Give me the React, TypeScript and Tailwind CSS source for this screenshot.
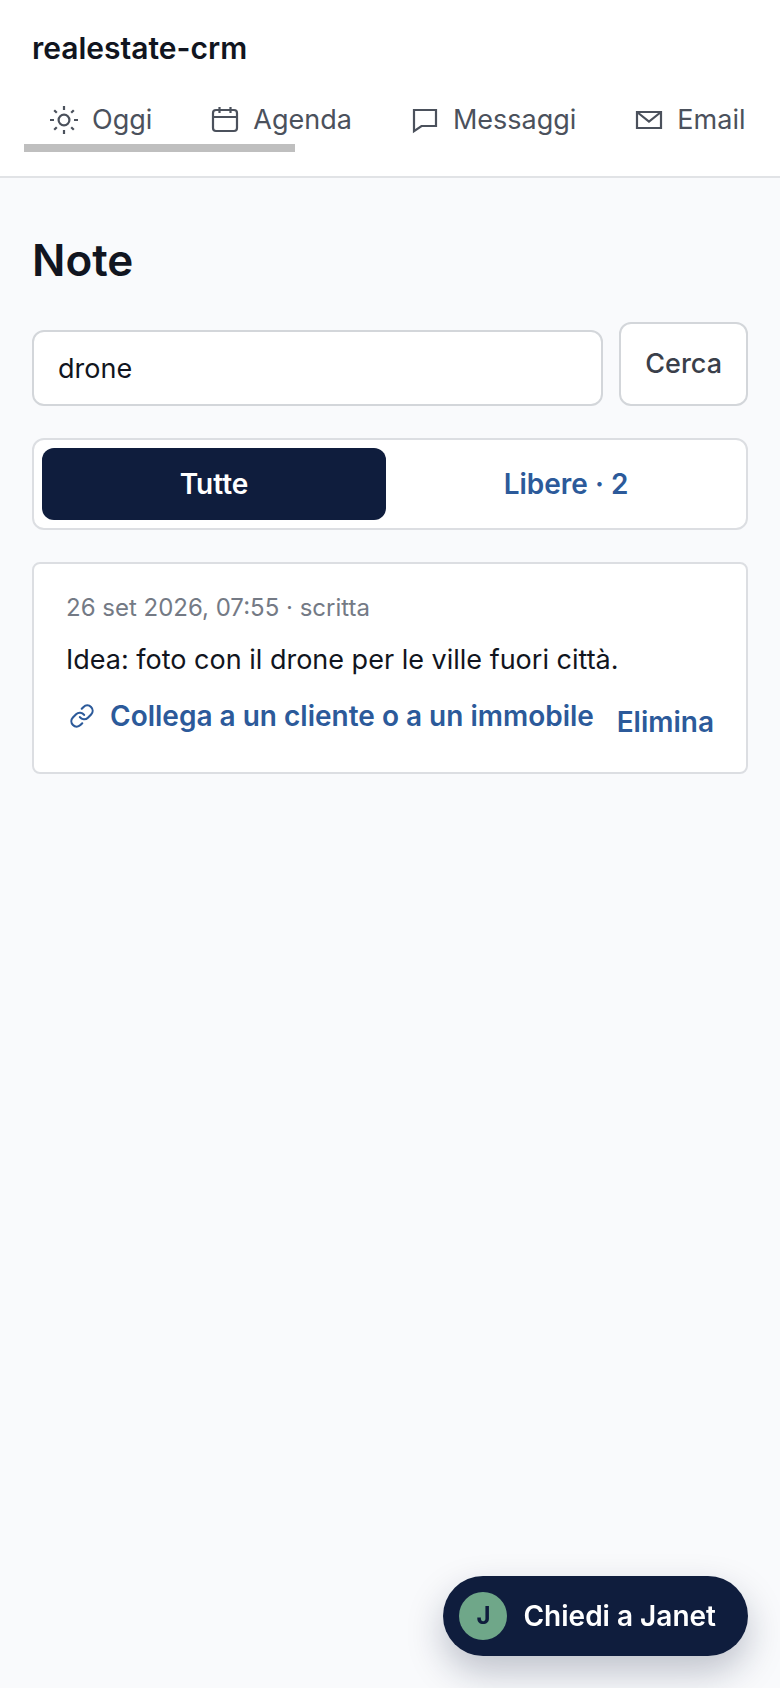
import { useState } from 'react';
import type { FormEvent, ReactNode } from 'react';

const iconProps = {
  viewBox: '0 0 32 32',
  fill: 'none',
  stroke: 'currentColor',
  strokeWidth: 2.2,
  className: 'size-8 shrink-0',
  'aria-hidden': true,
};

function SunIcon() {
  return (
    <svg {...iconProps}>
      <circle cx="16" cy="16" r="5.4" />
      <path d="M16 2v4M16 26v4M2 16h4M26 16h4M6.2 6.2l2.6 2.6M23.2 23.2l2.6 2.6M25.8 6.2l-2.6 2.6M8.8 23.2l-2.6 2.6" />
    </svg>
  );
}

function CalendarIcon() {
  return (
    <svg {...iconProps}>
      <rect x="4" y="6" width="24" height="21" rx="3" />
      <path d="M4 13h24M10.5 3v6M21.5 3v6" />
    </svg>
  );
}

function MessageIcon() {
  return (
    <svg {...iconProps}>
      <path d="M5 6h22v16H12.5L5 27.2z" />
    </svg>
  );
}

function MailIcon() {
  return (
    <svg {...iconProps}>
      <path d="M4 8h24v16H4zM4 8l12 9.5L28 8" />
    </svg>
  );
}

function LinkIcon() {
  return (
    <svg {...iconProps} viewBox="-3 -3 30 30" strokeWidth={2} strokeLinecap="round">
      <path d="M10 13a5 5 0 0 0 7.54.54l3-3a5 5 0 0 0-7.07-7.07l-1.72 1.71" />
      <path d="M14 11a5 5 0 0 0-7.54-.54l-3 3a5 5 0 0 0 7.07 7.07l1.71-1.71" />
    </svg>
  );
}

function NavItem({ icon, label }: { icon: ReactNode; label: string }) {
  return (
    <a href="#" className="flex shrink-0 items-center gap-3 px-6 py-1">
      {icon}
      {label}
    </a>
  );
}

const notes = [
  {
    id: 1,
    meta: '26 set 2026, 07:55 · scritta',
    text: 'Idea: foto con il drone per le ville fuori città.',
  },
];

export default function App() {
  const [query, setQuery] = useState('drone');
  const [tab, setTab] = useState('tutte');

  const handleSearch = (e: FormEvent) => {
    e.preventDefault();
  };

  const tabs = [
    { id: 'tutte', label: 'Tutte' },
    { id: 'libere', label: 'Libere · 2' },
  ];

  return (
    <div className="min-h-screen bg-[#f9fafc] font-['Inter',sans-serif] text-[27px] leading-10 text-[#111520]">
      <header className="border-b-2 border-[#e1e3e6] bg-white px-6 pt-7 pb-6">
        <div className="px-2 text-[30px] font-semibold">realestate-crm</div>
        <nav className="mt-7 text-[#4b515c]">
          <div className="flex gap-[9px] overflow-hidden">
            <NavItem icon={<SunIcon />} label="Oggi" />
            <NavItem icon={<CalendarIcon />} label="Agenda" />
            <NavItem icon={<MessageIcon />} label="Messaggi" />
            <NavItem icon={<MailIcon />} label="Email" />
          </div>
          {/* scroll position of the nav */}
          <div className="h-2 w-[37%] bg-[#bfbfbf]" />
        </nav>
      </header>

      <main className="px-8 pt-13">
        <h1 className="text-[44px] leading-[60px] font-semibold">Note</h1>

        <form onSubmit={handleSearch} className="mt-8 flex items-end gap-4">
          <input
            type="text"
            aria-label="Cerca nelle note"
            value={query}
            onChange={(e) => setQuery(e.target.value)}
            className="h-19 min-w-0 flex-1 rounded-xl border-2 border-[#d3d6da] bg-white px-6 outline-none"
          />
          <button
            type="submit"
            className="h-21 rounded-xl border-2 border-[#d3d6da] bg-white px-6 font-medium text-[#3a3f4a]"
          >
            Cerca
          </button>
        </form>

        <div className="mt-8 grid grid-cols-2 gap-2 rounded-xl border-2 border-[#dcdee2] bg-white p-2">
          {tabs.map((t) => (
            <button
              key={t.id}
              type="button"
              onClick={() => setTab(t.id)}
              className={
                tab === t.id
                  ? 'h-18 rounded-xl bg-[#0f1d3d] text-[28px] font-semibold text-white'
                  : 'h-18 rounded-xl text-[28px] font-semibold text-[#2c5a9a]'
              }
            >
              {t.label}
            </button>
          ))}
        </div>

        <ul className="mt-8 flex flex-col gap-4">
          {notes.map((note) => (
            <li key={note.id} className="rounded-lg border-2 border-[#dcdee2] bg-white px-8 pt-6 pb-[30px]">
              <p className="text-[24px] text-[#747a85]">{note.meta}</p>
              <p className="mt-3">{note.text}</p>
              <div className="mt-4 flex items-start justify-between text-[28px] font-semibold text-[#2c5a9a]">
                <button type="button" className="flex items-center gap-3">
                  <LinkIcon />
                  Collega a un cliente o a un immobile
                </button>
                <button type="button" className="pt-1.5">
                  Elimina
                </button>
              </div>
            </li>
          ))}
        </ul>
      </main>

      <button
        type="button"
        className="fixed right-8 bottom-8 flex h-20 items-center gap-4 rounded-full bg-[#0f1d3d] pr-8 pl-4 text-[28px] font-semibold text-white shadow-[0_16px_36px_rgba(15,29,61,0.25)]"
      >
        <span className="flex size-12 items-center justify-center rounded-full bg-[#6fa789] text-[24px] font-bold text-[#0f1d3d]">
          J
        </span>
        Chiedi a Janet
      </button>
    </div>
  );
}
